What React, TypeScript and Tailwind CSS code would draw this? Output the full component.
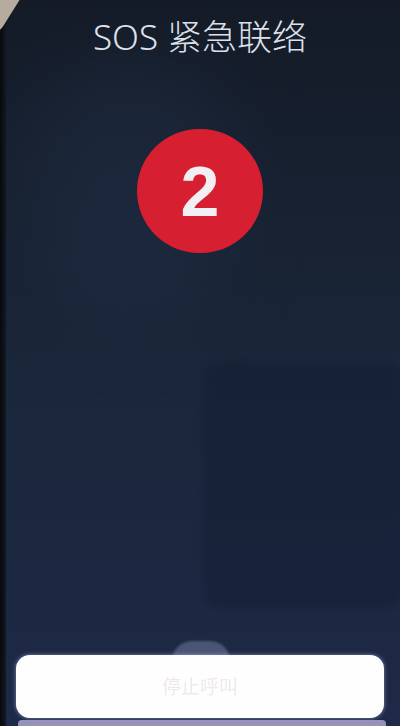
import React from "react";

export default function App() {
  return (
    <div className="relative w-[400px] h-[726px] overflow-hidden bg-gradient-to-b from-[#141b27] via-[#1a2639] to-[#1e2a47]">
      {/* reflection glow */}
      <div className="absolute left-[30px] top-[60px] w-[200px] h-[260px] rounded-full bg-[#22324a] opacity-40 blur-2xl" />
      {/* dark reflection panel */}
      <div className="absolute left-[203px] top-[362px] w-[200px] h-[248px] rounded-[18px] bg-[#111a30] opacity-35 blur-[3px]" />
      {/* left bezel */}
      <div className="absolute left-0 top-0 w-[6px] h-full bg-gradient-to-r from-[#07090c] to-[#131a24]" />
      {/* finger corner */}
      <div className="absolute -left-[20px] -top-[24px] w-[34px] h-[56px] rotate-[32deg] rounded-[12px] bg-[#b7aa9e]" />

      <div className="relative flex flex-col items-center h-full">
        <div
          className="mt-[12px] text-[35px] leading-[50px] text-[#dfe1ea] font-light"
          style={{ fontFamily: '"Noto Sans", "Noto Sans CJK SC", sans-serif' }}
        >
          SOS 紧急联络
        </div>
        <div className="mt-[67px] w-[126px] h-[124px] rounded-full bg-[#d61f31] flex items-center justify-center">
          <span
            className="text-[70px] leading-none font-bold text-[#f1eef4] mt-[2px]"
            style={{ fontFamily: '"Liberation Sans", Arial, sans-serif' }}
          >
            2
          </span>
        </div>

        <div className="mt-auto relative w-full px-[16px] pb-[8px]">
          <div className="absolute left-[172px] top-[-14px] w-[58px] h-[40px] rounded-full bg-[#55607e] opacity-80 blur-[1px]" />
          <div className="relative h-[63px] rounded-[14px] bg-[#fefeff] flex items-center justify-center shadow-[0_0_4px_rgba(200,190,255,0.6)]">
            <span
              className="text-[19px] text-[#efe8ee] blur-[0.7px]"
              style={{ fontFamily: '"Noto Sans CJK SC", sans-serif' }}
            >
              停止呼叫
            </span>
          </div>
        </div>
        <div className="absolute bottom-0 left-[18px] right-[14px] h-[6px] bg-[#b4abd8] rounded-t-[4px] opacity-80" />
      </div>
    </div>
  );
}
